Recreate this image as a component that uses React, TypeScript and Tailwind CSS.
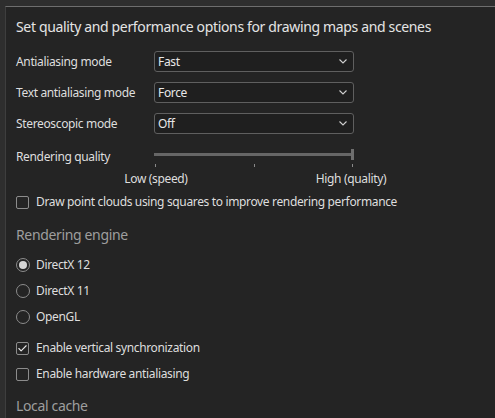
import { Check } from "lucide-react";

const font = { fontFamily: '"Noto Sans", "Open Sans", sans-serif' };

function Dropdown({ value }: { value: string }) {
  return (
    <div className="flex h-[21px] w-[200px] items-center justify-between rounded-[3px] border border-[#5f5f5f] bg-[#1f1f1f] pl-[3px] pr-[6px]">
      <span className="text-[12px] leading-[16px] text-[#e8e8e8]">{value}</span>
      <svg width="8" height="5" viewBox="0 0 8 5" fill="none">
        <path d="M0.5 0.5 L4 4 L7.5 0.5" stroke="#d0d0d0" strokeWidth="1.1" />
      </svg>
    </div>
  );
}

function CheckRow({ label, checked, className }: { label: string; checked?: boolean; className: string }) {
  return (
    <div className={`flex h-[20px] items-center gap-[7px] ${className}`}>
      <div className="flex h-[13px] w-[13px] items-center justify-center rounded-[2px] border border-[#8c8c8c]">
        {checked && <Check size={11} strokeWidth={2.4} color="#e6e6e6" />}
      </div>
      <span className="text-[12px] leading-[16px] text-[#dedede]">{label}</span>
    </div>
  );
}

function RadioRow({ label, selected, className }: { label: string; selected?: boolean; className: string }) {
  return (
    <div className={`flex h-[20px] items-center gap-[6px] ${className}`}>
      <div className="flex h-[14px] w-[14px] items-center justify-center rounded-full border border-[#8c8c8c]">
        {selected && <div className="h-[8px] w-[8px] rounded-full bg-[#d4d4d4]" />}
      </div>
      <span className="text-[12px] leading-[16px] text-[#dedede]">{label}</span>
    </div>
  );
}

export default function App() {
  return (
    <div className="h-[418px] w-[495px] overflow-hidden bg-[#2e2e2e] pl-[5px] pt-[6px] tracking-[-0.35px]" style={font}>
      <div className="flex h-full flex-col border-l border-t border-l-[#3e3e3e] border-t-[#6e6e6e] bg-[#242424] pl-[10px]">
        {/* Title */}
        <div className="mt-[10px] h-[20px] text-[14px] leading-[20px] text-[#e4e4e4]">
          Set quality and performance options for drawing maps and scenes
        </div>

        {/* Dropdowns */}
        <div className="mt-[14px] flex h-[21px] items-center">
          <span className="w-[138px] text-[12px] leading-[16px] text-[#dedede]">Antialiasing mode</span>
          <Dropdown value="Fast" />
        </div>
        <div className="mt-[10px] flex h-[21px] items-center">
          <span className="w-[138px] text-[12px] leading-[16px] text-[#dedede]">Text antialiasing mode</span>
          <Dropdown value="Force" />
        </div>
        <div className="mt-[10px] flex h-[21px] items-center">
          <span className="w-[138px] text-[12px] leading-[16px] text-[#dedede]">Stereoscopic mode</span>
          <Dropdown value="Off" />
        </div>

        {/* Slider */}
        <div className="mt-[13px] flex h-[20px] items-center">
          <span className="w-[138px] text-[12px] leading-[16px] text-[#dedede]">Rendering quality</span>
          <svg width="200" height="20" viewBox="0 0 200 20">
            <rect x="0" y="6" width="199" height="3" fill="#666666" />
            <rect x="197" y="2" width="3" height="11" fill="#6e6e6e" />
            <rect x="1" y="17" width="1" height="3" fill="#8a8a8a" />
            <rect x="100" y="17" width="1" height="3" fill="#8a8a8a" />
            <rect x="198" y="17" width="1" height="3" fill="#8a8a8a" />
          </svg>
        </div>
        <div className="mt-[4px] flex h-[16px] items-center text-[12px] leading-[16px] text-[#dedede]">
          <span className="ml-[90px] w-[100px] text-center">Low (speed)</span>
          <span className="ml-[95px] w-[100px] text-center">High (quality)</span>
        </div>

        <CheckRow className="mt-[5px]" label="Draw point clouds using squares to improve rendering performance" />

        {/* Rendering engine */}
        <div className="mt-[13px] h-[20px] text-[14px] leading-[20px] text-[#9e9e9e]">Rendering engine</div>
        <RadioRow className="mt-[10px]" label="DirectX 12" selected />
        <RadioRow className="mt-[6px]" label="DirectX 11" />
        <RadioRow className="mt-[6px]" label="OpenGL" />

        <CheckRow className="mt-[11px]" label="Enable vertical synchronization" checked />
        <CheckRow className="mt-[6px]" label="Enable hardware antialiasing" />

        <div className="mt-[12px] h-[20px] text-[14px] leading-[20px] text-[#9e9e9e]">Local cache</div>
      </div>
    </div>
  );
}
